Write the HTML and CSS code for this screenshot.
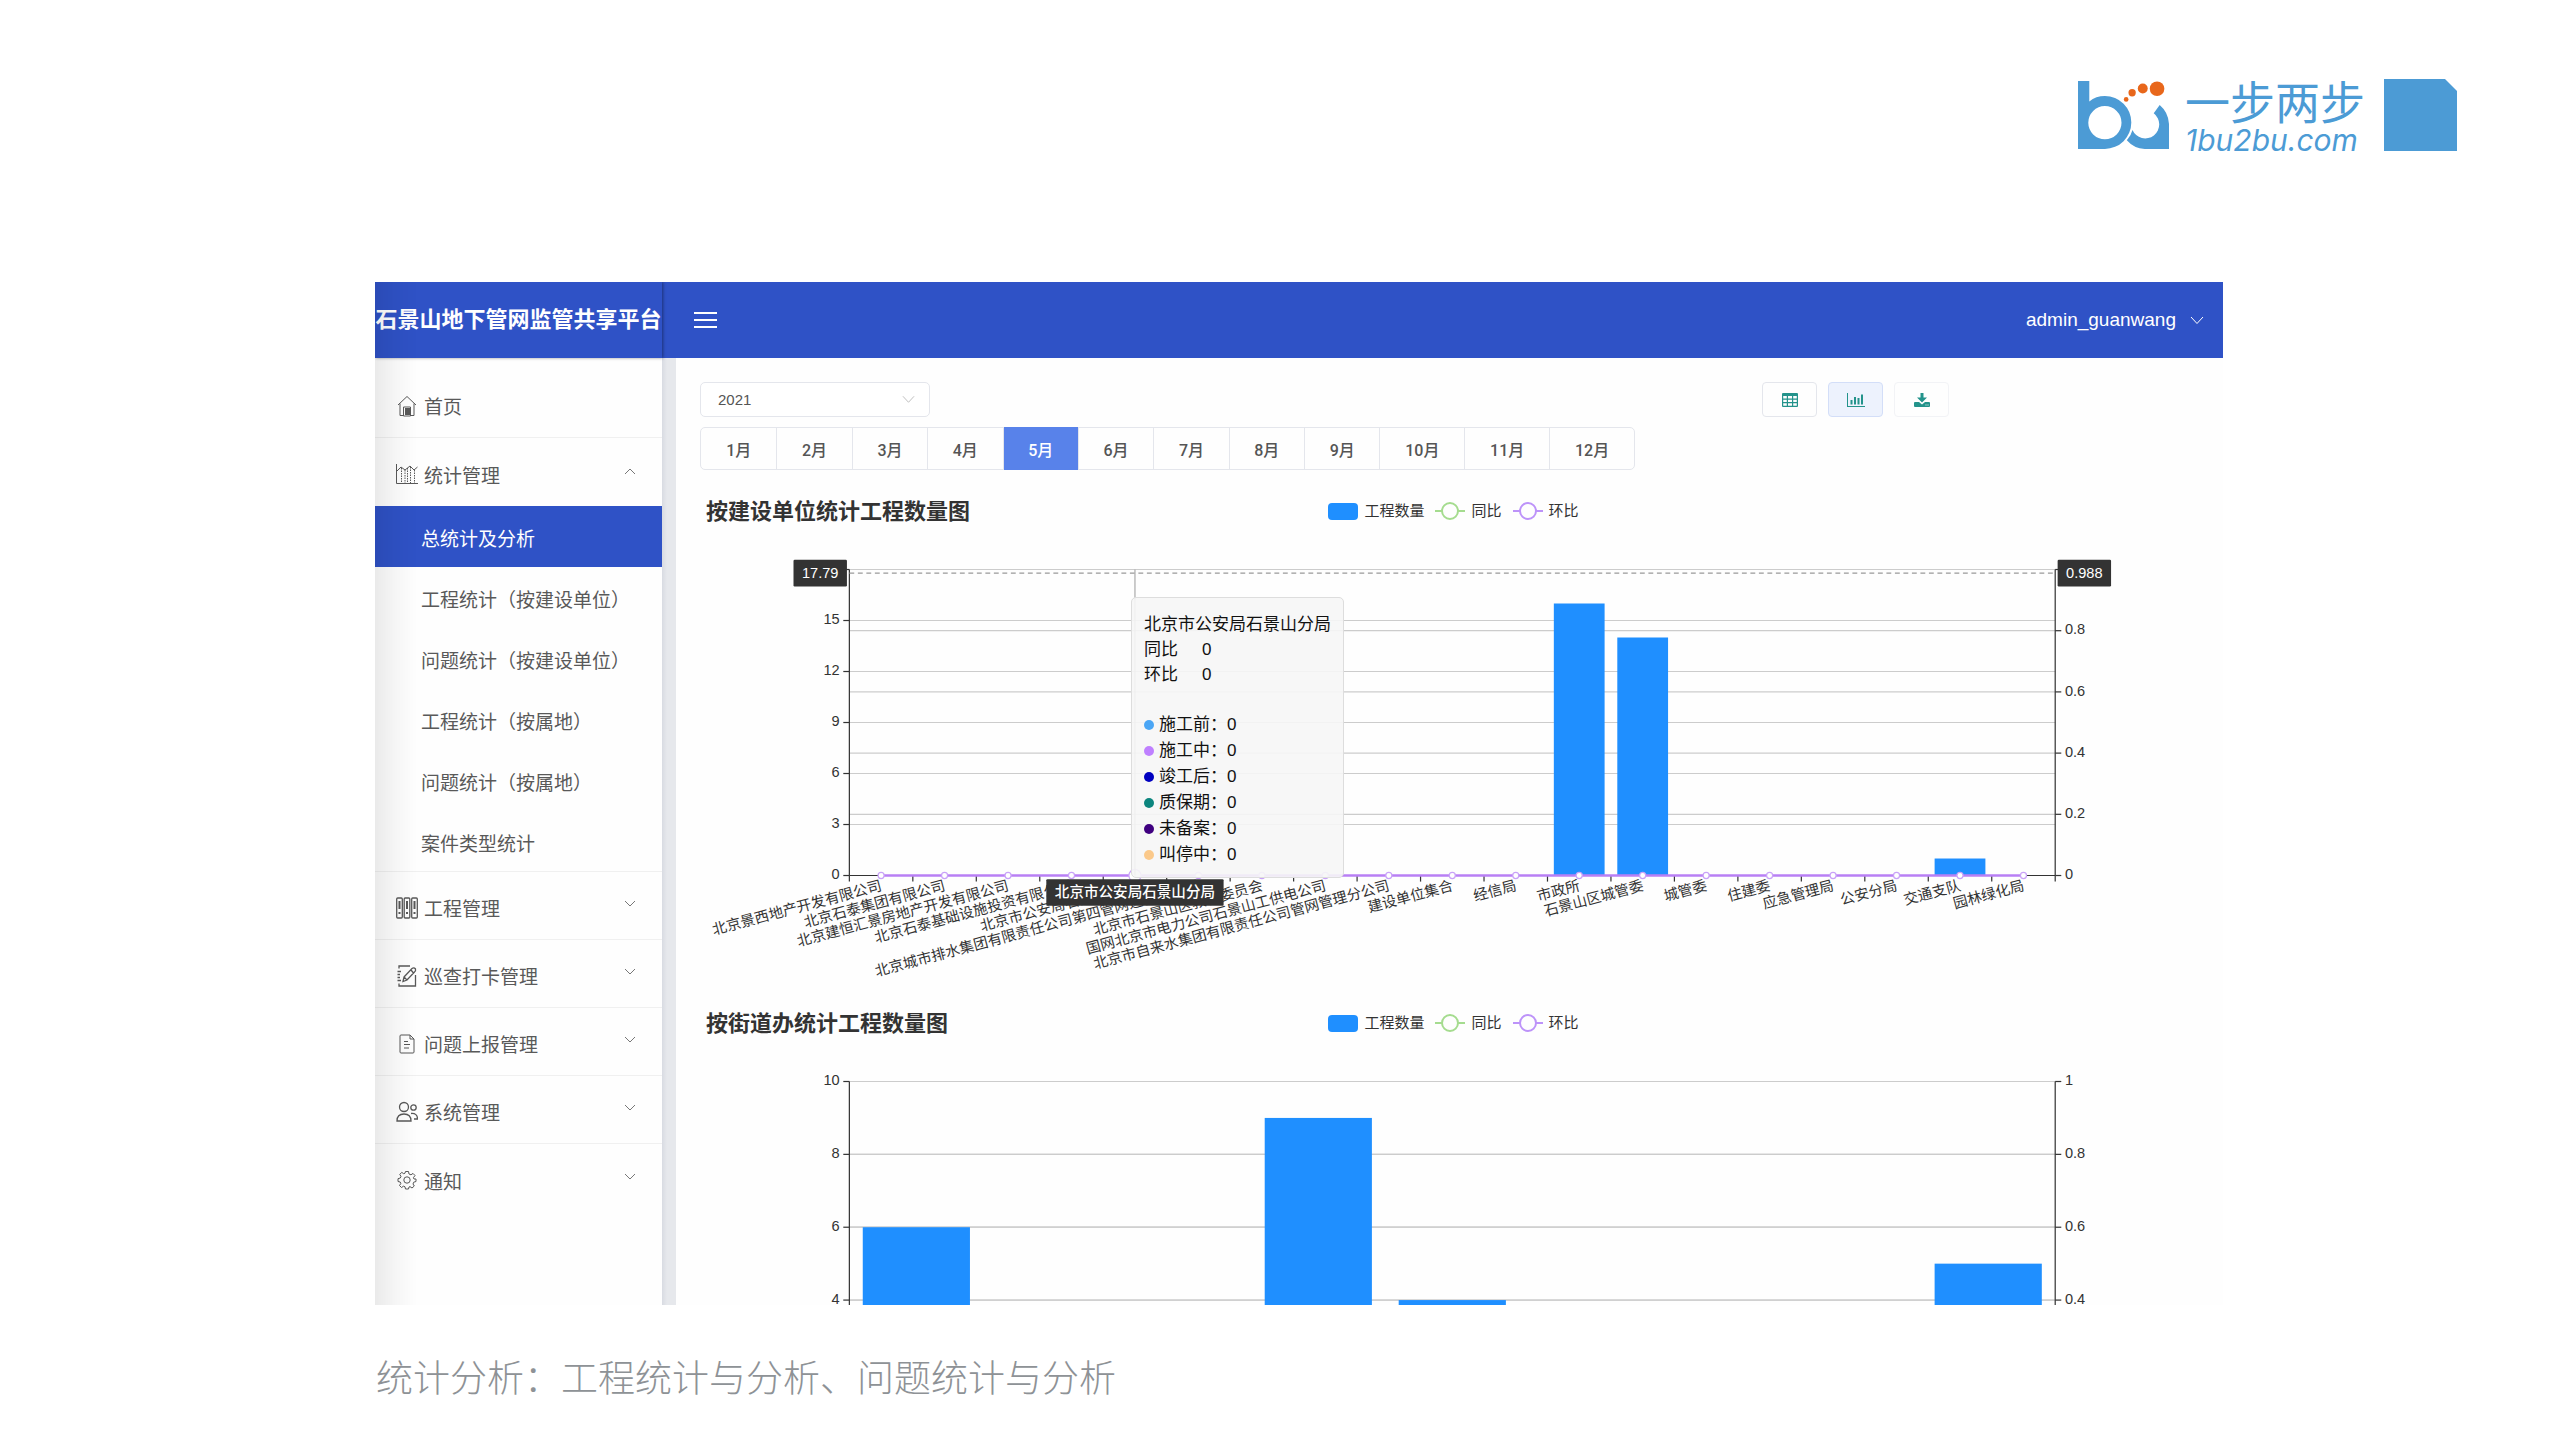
FILE: index.html
```html
<!DOCTYPE html>
<html lang="zh-CN">
<head>
<meta charset="utf-8">
<title>石景山地下管网监管共享平台</title>
<link rel="stylesheet" href="styles.css">
</head>
<body>
<header class="brand">
  <svg class="brand-mark" viewBox="84 93 274 204" aria-hidden="true">
    <path class="brand-blue" fill-rule="evenodd" d="M84 93H118V154Q138 138 165 138A79 79 0 0 1 165 297H84ZM165 168A50 50 0 1 0 165 268A50 50 0 1 0 165 168Z"/>
    <path class="brand-blue" d="M330 165A80 80 0 0 1 358 222V297H285A75 75 0 0 1 231 271Q244 257 248 240A42 42 0 1 0 312 190Z"/>
    <g class="brand-orange"><circle cx="229" cy="148" r="7"/><circle cx="247" cy="128" r="11"/><circle cx="279" cy="115" r="15"/><circle cx="322" cy="116" r="22"/></g>
  </svg>
  <div class="brand-text">
    <span class="brand-name">一步两步</span>
    <span class="brand-url">1bu2bu.com</span>
  </div>
  <div class="brand-block"></div>
</header>

<div class="app">
  <aside class="sidebar">
    <div class="app-title">石景山地下管网监管共享平台</div>
    <nav class="menu">
      <a class="menu-row" href="#">
        <svg class="icon" viewBox="0 0 22 22"><path d="M2 10L11 1.500L20 10M4 8.500V20.500H8M18 8.500V20.500H14"/><rect class="solid" x="9" y="13" width="5" height="7"/><path d="M7.500 12H14.500V21H7.500Z"/></svg>
        <span>首页</span>
      </a>
      <button class="menu-row" type="button" aria-expanded="true">
        <svg class="icon" viewBox="0 0 22 22"><path d="M.5 1V20.500H22M1 8L5 4L9 7L14 3L18 7L21.500 4"/><path stroke-dasharray="1.500 1" d="M5.500 5V20M9 7V20M11.500 5V20M14.500 4V20M18.500 7V20"/></svg>
        <span>统计管理</span>
        <svg class="chevron" viewBox="0 0 12 8"><path d="M1 7L6 2L11 7"/></svg>
      </button>
      <div class="submenu">
        <a class="sub-row active" href="#" aria-current="page">总统计及分析</a>
        <a class="sub-row" href="#">工程统计（按建设单位）</a>
        <a class="sub-row" href="#">问题统计（按建设单位）</a>
        <a class="sub-row" href="#">工程统计（按属地）</a>
        <a class="sub-row" href="#">问题统计（按属地）</a>
        <a class="sub-row" href="#">案件类型统计</a>
      </div>
      <button class="menu-row" type="button" aria-expanded="false">
        <svg class="icon thick" viewBox="0 0 22 22"><rect x=".7" y="1" width="5.600" height="20" rx="1"/><rect x="8.200" y="1" width="5.600" height="20" rx="1"/><rect x="15.700" y="1" width="5.600" height="20" rx="1"/><path stroke-width="2" d="M3.500 4V12M11 4V12M18.500 4V12M3.500 15V17M11 15V17M18.500 15V17"/></svg>
        <span>工程管理</span>
        <svg class="chevron" viewBox="0 0 12 8"><path d="M1 1L6 6L11 1"/></svg>
      </button>
      <button class="menu-row" type="button" aria-expanded="false">
        <svg class="icon thick" viewBox="0 0 22 22"><path d="M3 3.500V1H14M19.500 10V21H3V18.500M1.500 6.500H5M1.500 9.500H4M1.500 12.500H4M1.500 15.500H5"/><path d="M8 12L16 3.500Q18 2 19.500 4Q20 6 18.500 7L11 15L7 16.500ZM15 5L17.500 8M8 12L11 15"/></svg>
        <span>巡查打卡管理</span>
        <svg class="chevron" viewBox="0 0 12 8"><path d="M1 1L6 6L11 1"/></svg>
      </button>
      <button class="menu-row" type="button" aria-expanded="false">
        <svg class="icon" viewBox="0 0 22 22"><path d="M4 3Q4 2 5 2H14L18 6V19Q18 20 17 20H5Q4 20 4 19ZM14 2V6H18M8 8.500H12M8 11.500H14M8 15H13"/></svg>
        <span>问题上报管理</span>
        <svg class="chevron" viewBox="0 0 12 8"><path d="M1 1L6 6L11 1"/></svg>
      </button>
      <button class="menu-row" type="button" aria-expanded="false">
        <svg class="icon thick" viewBox="0 0 22 22"><circle cx="8" cy="6" r="4.500"/><path d="M1 20Q1 13 8 13T15 20Z"/><circle cx="17.500" cy="6.500" r="2.700"/><path d="M15 12.500Q21.500 12 21.500 18H18"/></svg>
        <span>系统管理</span>
        <svg class="chevron" viewBox="0 0 12 8"><path d="M1 1L6 6L11 1"/></svg>
      </button>
      <button class="menu-row" type="button" aria-expanded="false">
        <svg class="icon" viewBox="0 0 22 22"><circle cx="11" cy="11" r="3.200"/><path d="M9.500 2.500H12.500L13 5L15 5.800L17 4.400L19 6.500L17.400 8.700L18 10H20V12.500L17.700 13.200L17 15L18.300 17L16 19L14 17.600L13 18L12.500 20H9.500L9 17.800L7.500 17.200L5.500 18.500L3.500 16.500L4.800 14.500L4.200 13L2 12.500V9.700L4.300 9L5 7.300L3.700 5.400L5.800 3.400L7.700 4.700L9 4.200Z"/></svg>
        <span>通知</span>
        <svg class="chevron" viewBox="0 0 12 8"><path d="M1 1L6 6L11 1"/></svg>
      </button>
    </nav>
  </aside>

  <div class="workspace">
    <header class="topbar">
      <button class="burger" type="button" aria-label="折叠菜单"><i></i><i></i><i></i></button>
      <button class="user" type="button">admin_guanwang
        <svg class="user-arrow" viewBox="0 0 14 9"><path d="M1 1L7 7.500L13 1"/></svg>
      </button>
    </header>
    <main class="content">
      <div class="toolbar">
        <div class="year">
          <select aria-label="年份"><option>2021</option></select>
          <svg class="year-arrow" viewBox="0 0 14 9"><path d="M1 1L7 7.500L13 1"/></svg>
        </div>
        <div class="views">
          <button class="view" type="button" aria-label="表格"><svg viewBox="0 0 16 14"><path fill-rule="evenodd" d="M1 0H15Q16 0 16 1V13Q16 14 15 14H1Q0 14 0 13V1Q0 0 1 0ZM1.200 3V5.500H4.800V3ZM6 3V5.500H10V3ZM11.200 3V5.500H14.800V3ZM1.200 6.700V9H4.800V6.700ZM6 6.700V9H10V6.700ZM11.200 6.700V9H14.800V6.700ZM1.200 10.200V12.800H4.800V10.200ZM6 10.200V12.800H10V10.200ZM11.200 10.200V12.800H14.800V10.200Z"/></svg></button>
          <button class="view on" type="button" aria-label="图表"><svg viewBox="0 0 18 14"><path d="M0 0H1V13H18V14H0ZM3.500 7H5.500V11.500H3.500ZM7 4H9V11.500H7ZM10.500 5H12.500V11.500H10.500ZM14 1.500H16V11.500H14Z"/></svg></button>
          <button class="view faint" type="button" aria-label="下载"><svg viewBox="0 0 16 14"><path fill-rule="evenodd" d="M6.500 0H9.500V4.500H13L8 9.500L3 4.500H6.500ZM0 10Q0 9 1 9H5L8 11.500L11 9H15Q16 9 16 10V13Q16 14 15 14H1Q0 14 0 13ZM11.500 11.500H12.500V12.500H11.500ZM13.500 11.500H14.500V12.500H13.500Z"/></svg></button>
        </div>
      </div>
      <div class="months" role="group" aria-label="月份">
        <button type="button">1月</button><button type="button">2月</button><button type="button">3月</button><button type="button">4月</button><button type="button" class="on" aria-pressed="true">5月</button><button type="button">6月</button><button type="button">7月</button><button type="button">8月</button><button type="button">9月</button><button type="button">10月</button><button type="button">11月</button><button type="button">12月</button>
      </div>

      <section class="panel">
        <div class="panel-head">
          <h2>按建设单位统计工程数量图</h2>
          <ul class="legend">
            <li><i class="swatch"></i>工程数量</li>
            <li><svg class="line-key green" viewBox="0 0 30 18"><path d="M0 9H7M23 9H30"/><circle cx="15" cy="9" r="8"/></svg>同比</li>
            <li><svg class="line-key violet" viewBox="0 0 30 18"><path d="M0 9H7M23 9H30"/><circle cx="15" cy="9" r="8"/></svg>环比</li>
          </ul>
        </div>
        <div class="plot">
          <svg class="chart" id="chart-builders" viewBox="0 0 1241 397"></svg>
          <div class="tooltip">
            <p>北京市公安局石景山分局</p>
            <p class="ratio"><span>同比</span><span>0</span></p>
            <p class="ratio"><span>环比</span><span>0</span></p>
            <ul>
              <li><i class="dot before"></i>施工前：0</li>
              <li><i class="dot during"></i>施工中：0</li>
              <li><i class="dot after"></i>竣工后：0</li>
              <li><i class="dot warranty"></i>质保期：0</li>
              <li><i class="dot unfiled"></i>未备案：0</li>
              <li><i class="dot halted"></i>叫停中：0</li>
            </ul>
          </div>
        </div>
      </section>

      <section class="panel">
        <div class="panel-head">
          <h2>按街道办统计工程数量图</h2>
          <ul class="legend">
            <li><i class="swatch"></i>工程数量</li>
            <li><svg class="line-key green" viewBox="0 0 30 18"><path d="M0 9H7M23 9H30"/><circle cx="15" cy="9" r="8"/></svg>同比</li>
            <li><svg class="line-key violet" viewBox="0 0 30 18"><path d="M0 9H7M23 9H30"/><circle cx="15" cy="9" r="8"/></svg>环比</li>
          </ul>
        </div>
        <div class="plot"><svg class="chart" id="chart-streets" viewBox="0 0 1241 397"></svg></div>
      </section>
    </main>
  </div>
</div>

<p class="caption">统计分析：工程统计与分析、问题统计与分析</p>
<script src="charts.js"></script>
</body>
</html>
```
FILE: styles.css
```css
* { box-sizing: border-box; }

body {
  margin: 0;
  height: 100vh;
  display: grid;
  grid-template-rows: 282px minmax(0, 1fr) 135px;
  background: #fff;
  color: #333;
  font-family: "Liberation Sans", "Noto Sans CJK SC", sans-serif;
}

button, select { font: inherit; color: inherit; margin: 0; }
button { border: 0; background: none; padding: 0; cursor: pointer; }
a { color: inherit; text-decoration: none; }
ul, p, h2 { margin: 0; padding: 0; list-style: none; }
svg { display: block; fill: none; stroke: currentColor; }

/* Brand strip */
.brand {
  display: flex;
  justify-content: flex-end;
  align-items: flex-start;
  padding: 79px 102px 0 0;
  color: #4c9bd5;
}
.brand-mark { width: 91px; height: 68px; margin: 2px 16px 0 0; stroke: none; }
.brand-blue { fill: #4c9bd5; }
.brand-orange { fill: #e8671b; }
.brand-text { display: flex; flex-direction: column; width: 180px; margin-right: 19px; white-space: nowrap; }
.brand-name { font-size: 45px; line-height: 43px; font-weight: 400; font-family: "Noto Sans CJK SC", sans-serif; }
.brand-url { font-size: 30px; line-height: 36px; font-style: italic; font-family: Inter, sans-serif; }
.brand-block { width: 73px; height: 72px; background: #4c9bd5; clip-path: polygon(0 0, 61px 0, 100% 12px, 100% 100%, 0 100%); }

/* Application frame */
.app {
  display: grid;
  grid-template-columns: 287px minmax(0, 1fr);
  margin: 0 336px 0 375px;
  overflow: hidden;
}

.sidebar { position: relative; background: #fefefe; }
.sidebar::after {
  content: "";
  position: absolute;
  inset: 0 auto 15px 0;
  width: 42px;
  pointer-events: none;
  background: linear-gradient(90deg, rgba(0, 0, 0, .08), rgba(0, 0, 0, .03) 50%, transparent);
  mask-image: linear-gradient(#000 92%, transparent);
}
.app-title {
  height: 76px;
  line-height: 76px;
  background: #2f52c6;
  color: #fff;
  font-size: 22px;
  font-weight: 700;
  text-align: center;
  white-space: nowrap;
  box-shadow: 1px 0 3px rgba(0, 0, 0, .4);
}
.menu { padding-top: 12px; font-size: 19px; color: #595959; }
.menu-row {
  display: flex;
  align-items: center;
  gap: 6px;
  width: 100%;
  height: 68px;
  padding: 4px 26px 0 21px;
  border-bottom: 1px solid #f0f0f0;
  text-align: left;
}
.menu-row[aria-expanded="true"], .menu-row:last-child { border-bottom: 0; }
.icon { width: 22px; height: 22px; stroke-width: 1; }
.icon.thick { stroke-width: 1.3; }
.icon .solid { fill: currentColor; stroke: none; }
.chevron { width: 12px; height: 8px; margin: -7px 0 0 auto; stroke: #777; }
.submenu { border-bottom: 1px solid #f0f0f0; height: 366px; }
.sub-row { display: flex; align-items: center; height: 61px; padding: 2px 0 0 46px; white-space: nowrap; }
.sub-row.active { background: #2f52c6; color: #fff; }

.workspace { display: flex; flex-direction: column; min-width: 0; background: linear-gradient(90deg, #d8dbe2, #e6e8ec 5px) 0 0 / 14px 100% no-repeat; }
.topbar {
  display: flex;
  justify-content: space-between;
  align-items: center;
  flex: none;
  height: 76px;
  padding: 0 19px 0 32px;
  background: #2f52c6;
  color: #fff;
}
.burger { display: flex; flex-direction: column; gap: 5px; width: 23px; }
.burger i { height: 2px; background: #fff; }
.user { display: flex; align-items: center; gap: 14px; font-size: 19px; }
.user-arrow { width: 14px; height: 9px; }

.content { flex: none; margin-left: 14px; padding: 24px 16px 0 24px; background: #fefefe; }
.toolbar { display: flex; justify-content: space-between; padding-right: 258px; }
.year { position: relative; width: 230px; height: 35px; }
.year select {
  width: 100%;
  height: 100%;
  padding: 0 17px;
  appearance: none;
  border: 1px solid #e4e6ec;
  border-radius: 5px;
  background: #fff;
  color: #555;
  font-size: 15px;
}
.year-arrow { position: absolute; right: 15px; top: 13px; width: 13px; height: 9px; color: #bbb; }
.views { display: flex; gap: 11px; }
.view {
  display: grid;
  place-items: center;
  width: 55px;
  height: 35px;
  border: 1px solid #e4e6ec;
  border-radius: 4px;
}
.view.on { background: #edf2fd; border-color: #d3def8; }
.view.faint { border-color: #f2f3f6; }
.view svg { height: 14px; fill: #23938b; stroke: none; }

.months {
  display: grid;
  grid-template-columns: repeat(9, 151fr) repeat(3, 170fr);
  width: 935px;
  height: 43px;
  margin-top: 10px;
  border: 1px solid #e4e6ec;
  border-radius: 5px;
  font-family: Roboto, "Noto Sans CJK SC", sans-serif;
  font-size: 16px;
  font-weight: 500;
  color: #555;
}
.months button + button { border-left: 1px solid #e4e6ec; }
.months .on { margin: -1px 0; background: #5882ea; color: #fff; }

/* Chart panels */
.panel:first-of-type { margin-top: 27px; }
.panel-head { display: grid; grid-template-columns: 1fr auto 1fr; align-items: center; height: 30px; }
.panel-head h2 { padding-left: 6px; font-size: 22px; line-height: 30px; font-weight: 700; color: #333; white-space: nowrap; }
.legend { display: flex; gap: 11px; font-size: 15px; line-height: 18px; margin-top: -2px; }
.legend li { display: flex; align-items: center; gap: 6px; }
.swatch { width: 30px; height: 17px; border-radius: 4px; background: #1f8fff; }
.line-key { width: 30px; height: 18px; stroke-width: 2; }
.line-key.green { stroke: #a5dc8f; }
.line-key.violet { stroke: #bd93f9; }

.plot { position: relative; }
.chart { width: 100%; font-size: 12px; }
.chart text { fill: #333; stroke: none; }
.chart .grid { stroke: #ccc; }
.chart .axis { stroke: #333; }
.chart .bar { fill: #1f8fff; stroke: none; }
.chart .trend { stroke: #b87ff5; stroke-width: 2; }
.chart .marker { fill: #fff; stroke: #c9a2f8; }
.chart .pointer { stroke: #aaa; }
.chart .pointer.dashed { stroke: #999; stroke-dasharray: 4 3; }
.chart .flag { fill: #333; stroke: none; }
.chart .flag-text { fill: #fff; font-weight: 500; }

.tooltip {
  position: absolute;
  left: 431px;
  top: 70px;
  width: 213px;
  padding: 14px 12px 9px;
  border: 1px solid #ddd;
  border-radius: 5px;
  background: rgba(246, 246, 246, .9);
  color: #111;
  font-size: 17px;
  line-height: 25px;
  white-space: nowrap;
}
.ratio { display: flex; gap: 24px; }
.tooltip ul { margin-top: 25px; line-height: 26px; }
.tooltip li { display: flex; align-items: center; gap: 5px; }
.dot { width: 10px; height: 10px; border-radius: 50%; }
.before { background: #4ba6f5; }
.during { background: #bf80ff; }
.after { background: #0000c0; }
.warranty { background: #0c857e; }
.unfiled { background: #3f0080; }
.halted { background: #fbc98a; }

.caption {
  padding: 44px 0 0 376px;
  font: 300 37px/54px "Noto Sans CJK SC", sans-serif;
  color: #8e9296;
}
```
FILE: charts.js
```js
const NS = 'http://www.w3.org/2000/svg';
const LEFT = 123, RIGHT = 1116, TOP = 35;

function add(svg, tag, attrs, text) {
  const node = document.createElementNS(NS, tag);
  for (const key in attrs) node.setAttribute(key, attrs[key]);
  if (text !== undefined) node.textContent = text;
  svg.appendChild(node);
  return node;
}

function line(svg, cls, x1, y1, x2, y2) {
  add(svg, 'line', { class: cls, x1, y1, x2, y2 });
}

function flag(svg, x, y, w, text) {
  add(svg, 'rect', { class: 'flag', x, y, width: w, height: 22, rx: 1 });
  add(svg, 'text', { class: 'flag-text', x: x + w / 2, y: y + 15, 'text-anchor': 'middle' }, text);
}

function drawChart(id, o) {
  const svg = document.getElementById(id);
  const bottom = TOP + o.height;
  const from = o.labelsFrom || 0;
  const step = (RIGHT - LEFT) / o.values.length;
  const yLeft = v => bottom - v / o.max * o.height;
  const yRight = v => bottom - v * o.height;

  for (let v = o.tick; v <= o.max; v += o.tick) line(svg, 'grid', LEFT, yLeft(v), RIGHT, yLeft(v));
  for (let i = 1; i <= 5; i++) line(svg, 'grid', LEFT, yRight(i / 5), RIGHT, yRight(i / 5));

  o.values.forEach((v, i) => {
    if (v) add(svg, 'rect', { class: 'bar', x: LEFT + step * (i + .1), y: yLeft(v), width: step * .8, height: bottom - yLeft(v) });
  });

  line(svg, 'axis', LEFT, TOP, LEFT, bottom);
  line(svg, 'axis', RIGHT, TOP, RIGHT, bottom);
  line(svg, 'axis', LEFT, bottom, RIGHT, bottom);
  for (let i = 0; i <= o.values.length; i++) line(svg, 'axis', LEFT + step * i, bottom, LEFT + step * i, bottom + 5);

  for (let v = from * o.tick; v <= o.max; v += o.tick) {
    line(svg, 'axis', LEFT - 5, yLeft(v), LEFT, yLeft(v));
    if (!(o.pointer && v === o.max)) add(svg, 'text', { x: LEFT - 8, y: yLeft(v) + 3, 'text-anchor': 'end' }, v);
  }
  for (let i = from; i <= 5; i++) {
    line(svg, 'axis', RIGHT, yRight(i / 5), RIGHT + 5, yRight(i / 5));
    if (!(o.pointer && i === 5)) add(svg, 'text', { x: RIGHT + 8, y: yRight(i / 5) + 3 }, i / 5);
  }

  const center = i => LEFT + step * (i + .5);
  o.labels.forEach((name, i) => {
    add(svg, 'text', { 'text-anchor': 'end', y: 5, transform: `translate(${center(i)} ${bottom + 7}) rotate(-15)` }, name);
  });

  line(svg, 'trend', center(0), bottom, center(o.values.length - 1), bottom);
  o.values.forEach((v, i) => add(svg, 'circle', { class: 'marker', cx: center(i), cy: bottom, r: o.pointer && i === o.pointer.index ? 5 : 2.5 }));

  if (o.pointer) {
    const p = o.pointer, y = yLeft(p.value), x = center(p.index);
    line(svg, 'pointer dashed', LEFT, y, RIGHT, y);
    line(svg, 'pointer', x, TOP, x, bottom);
    flag(svg, LEFT - 46, y - 11, 44, p.value);
    flag(svg, RIGHT + 2, y - 11, 44, p.ratio);
    flag(svg, x - 73, bottom + 3, 146, o.labels[p.index]);
  }
}

drawChart('chart-builders', {
  height: 252, max: 18, tick: 3,
  values: [0, 0, 0, 0, 0, 0, 0, 0, 0, 0, 0, 16, 14, 0, 0, 0, 0, 1, 0],
  labels: ['北京景西地产开发有限公司', '北京石泰集团有限公司', '北京建恒汇景房地产开发有限公司', '北京石泰基础设施投资有限公司',
    '北京市公安局石景山分局', '北京城市排水集团有限责任公司第四管网运营分公司', '北京市石景山区教育委员会',
    '国网北京市电力公司石景山工供电公司', '北京市自来水集团有限责任公司管网管理分公司', '建设单位集合', '经信局', '市政所',
    '石景山区城管委', '城管委', '住建委', '应急管理局', '公安分局', '交通支队', '园林绿化局'],
  pointer: { index: 4, value: 17.79, ratio: 0.988 }
});

drawChart('chart-streets', {
  height: 300, max: 10, tick: 2, labelsFrom: 2,
  values: [6, 0, 0, 9, 4, 0, 0, 0, 5],
  labels: []
});
```
